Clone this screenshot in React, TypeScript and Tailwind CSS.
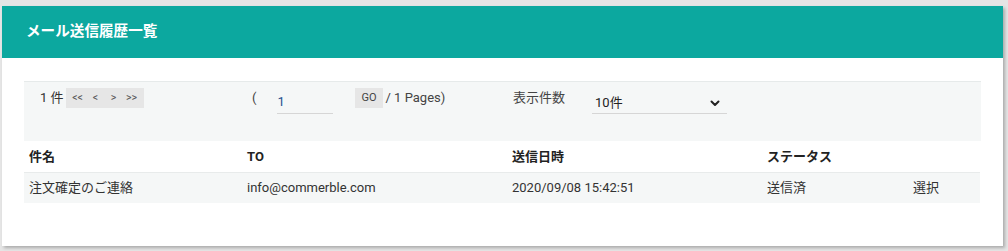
import React from "react";

const font = { fontFamily: "Roboto, 'Noto Sans CJK JP', sans-serif" };

export default function App() {
  return (
    <div className="w-[1008px] h-[251px] bg-[#e5e5e5] pt-[6px] pl-[2px]" style={font}>
      <div className="w-[1001px] h-[240px] bg-white shadow-[2px_2px_3px_rgba(0,0,0,0.25)]">
        <div className="h-[52px] bg-[#0ca89f] flex items-center pl-[24px]">
          <h1 className="text-white font-bold text-[14.6px]">メール送信履歴一覧</h1>
        </div>
        <div className="px-[22px] pt-[23px]">
          <div className="bg-[#f5f7f7] border-t border-[#e6eaea] h-[60px] flex text-[13px] text-[#333]">
            <div className="w-[226px] pl-[16px] pt-[6px] flex items-start">
              <span className="leading-[20px] mr-[2px]">1 件</span>
              <div className="flex items-center h-[20px] bg-[#e6e6e6] text-[10.5px] text-[#555] px-[3px]">
                <span className="w-[18px] text-center">&lt;&lt;</span>
                <span className="w-[18px] text-center">&lt;</span>
                <span className="w-[18px] text-center">&gt;</span>
                <span className="w-[18px] text-center">&gt;&gt;</span>
              </div>
            </div>
            <div className="w-[263px] pt-[6px] flex items-start">
              <span className="leading-[20px] ml-[2px] text-[#444]">(</span>
              <div className="ml-[21px] w-[56px] h-[26px] border-b border-[#d6d6d6] pt-[5px] leading-[18px] text-[#1f4f8f]">1</div>
              <div className="ml-[22px] h-[20px] bg-[#e6e6e6] px-[6px] text-[11px] leading-[20px] text-[#444]">GO</div>
              <span className="leading-[20px] ml-[3px] text-[#444]">/ 1 Pages)</span>
            </div>
            <div className="pt-[6px] flex items-start">
              <span className="leading-[20px] text-[#444]">表示件数</span>
              <div className="ml-[27px] w-[135px] h-[26px] border-b border-[#d6d6d6] pt-[5px] leading-[18px] flex justify-between items-center pl-[3px] pr-[6px]">
                <span className="text-[#222]">10件</span>
                <svg width="12" height="12" viewBox="0 0 24 24" fill="none" stroke="#222" strokeWidth="4" strokeLinecap="round" strokeLinejoin="round">
                  <path d="M5 9l7 7 7-7" />
                </svg>
              </div>
            </div>
          </div>
          <table className="w-[956px] border-collapse text-[13px] table-fixed">
            <colgroup>
              <col className="w-[218px]" />
              <col className="w-[265px]" />
              <col className="w-[255px]" />
              <col className="w-[146px]" />
              <col className="w-[72px]" />
            </colgroup>
            <thead>
              <tr className="h-[31px] border-b border-[#e8ebeb] border-t border-t-white">
                <th className="text-left font-bold text-[#222] pl-[5px]">件名</th>
                <th className="text-left font-bold text-[#222] pl-[5px]">TO</th>
                <th className="text-left font-bold text-[#222] pl-[5px]">送信日時</th>
                <th className="text-left font-bold text-[#222] pl-[5px]">ステータス</th>
                <th></th>
              </tr>
            </thead>
            <tbody>
              <tr className="h-[30px] bg-[#f5f7f7] text-[#333]">
                <td className="pl-[5px]">注文確定のご連絡</td>
                <td className="pl-[5px]">info@commerble.com</td>
                <td className="pl-[5px]">2020/09/08 15:42:51</td>
                <td className="pl-[5px]">送信済</td>
                <td className="pl-[5px]">選択</td>
              </tr>
            </tbody>
          </table>
        </div>
      </div>
    </div>
  );
}
